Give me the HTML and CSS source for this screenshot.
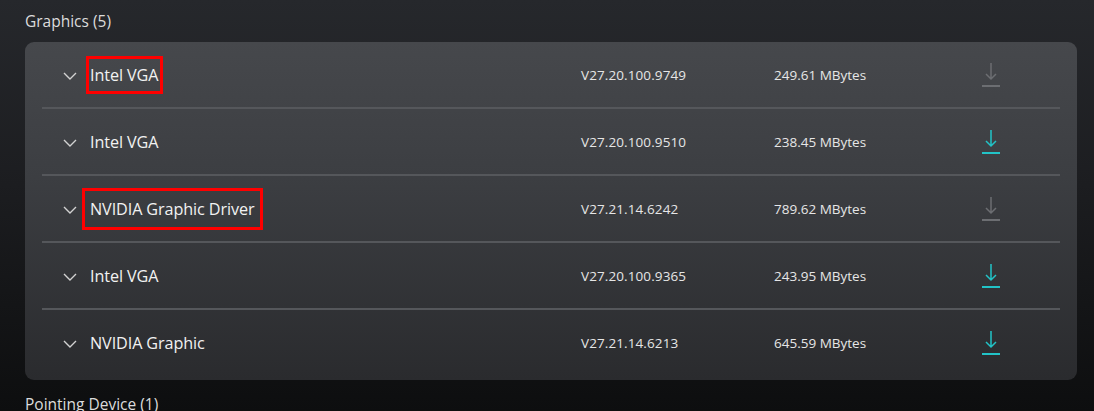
FILE: index.html
```html
<!DOCTYPE html>
<html>
<head>
<meta charset="utf-8">
<link rel="stylesheet" href="styles.css">
</head>
<body>
<div class="page">
  <div class="section-title">Graphics (5)</div>
  <div class="card">
    <div class="row">
      <svg class="chev" viewBox="0 0 14 8"><polyline points="1,1 7,7 13,1"/></svg>
      <div class="name"><span class="hl hl-a">Intel VGA</span></div>
      <div class="ver">V27.20.100.9749</div>
      <div class="size">249.61 MBytes</div>
      <svg class="dl off" viewBox="0 0 18 24"><path d="M9 0 V16 M4 11 L9 16 L14 11"/><path class="bar" d="M0 23 H18"/></svg>
    </div>
    <div class="row">
      <svg class="chev" viewBox="0 0 14 8"><polyline points="1,1 7,7 13,1"/></svg>
      <div class="name">Intel VGA</div>
      <div class="ver">V27.20.100.9510</div>
      <div class="size">238.45 MBytes</div>
      <svg class="dl on" viewBox="0 0 18 24"><path d="M9 0 V16 M4 11 L9 16 L14 11"/><path class="bar" d="M0 23 H18"/></svg>
    </div>
    <div class="row">
      <svg class="chev" viewBox="0 0 14 8"><polyline points="1,1 7,7 13,1"/></svg>
      <div class="name"><span class="hl hl-b">NVIDIA Graphic Driver</span></div>
      <div class="ver">V27.21.14.6242</div>
      <div class="size">789.62 MBytes</div>
      <svg class="dl off" viewBox="0 0 18 24"><path d="M9 0 V16 M4 11 L9 16 L14 11"/><path class="bar" d="M0 23 H18"/></svg>
    </div>
    <div class="row">
      <svg class="chev" viewBox="0 0 14 8"><polyline points="1,1 7,7 13,1"/></svg>
      <div class="name">Intel VGA</div>
      <div class="ver">V27.20.100.9365</div>
      <div class="size">243.95 MBytes</div>
      <svg class="dl on" viewBox="0 0 18 24"><path d="M9 0 V16 M4 11 L9 16 L14 11"/><path class="bar" d="M0 23 H18"/></svg>
    </div>
    <div class="row last">
      <svg class="chev" viewBox="0 0 14 8"><polyline points="1,1 7,7 13,1"/></svg>
      <div class="name">NVIDIA Graphic</div>
      <div class="ver">V27.21.14.6213</div>
      <div class="size">645.59 MBytes</div>
      <svg class="dl on" viewBox="0 0 18 24"><path d="M9 0 V16 M4 11 L9 16 L14 11"/><path class="bar" d="M0 23 H18"/></svg>
    </div>
  </div>
  <div class="section-title next">Pointing Device (1)</div>
</div>
</body>
</html>
```
FILE: styles.css
```css
html, body {
  margin: 0;
  padding: 0;
}
body {
  width: 1094px;
  height: 411px;
  overflow: hidden;
  background: linear-gradient(180deg, #26282c 0%, #1c1d20 45%, #0d0e0f 100%);
  font-family: "Open Sans", "Noto Sans", sans-serif;
  color: #eeeeee;
}
.page {
  padding: 0 17px 0 25px;
}
.section-title {
  height: 42px;
  line-height: 42px;
  font-size: 15.5px;
  color: #dcdcdc;
}
.section-title.next {
  margin-top: 10px;
  height: 28px;
  line-height: 28px;
}
.card {
  width: 1052px;
  box-sizing: border-box;
  padding: 0 17px 4px 17px;
  border-radius: 9px;
  background: linear-gradient(180deg, #46484c 0%, #3c3e42 40%, #2a2b2e 100%);
}
.row {
  display: grid;
  grid-template-columns: 48px 491px 193px 208px 18px;
  align-items: center;
  height: 65px;
  border-bottom: 2px solid #55575b;
}
.row.last {
  border-bottom: none;
  height: 66px;
}
.chev {
  width: 14px;
  height: 8px;
  margin-left: 21px;
  margin-top: 2px;
  fill: none;
  stroke: #d2d2d2;
  stroke-width: 1.4;
}
.name {
  font-size: 16.2px;
  color: #f2f2f2;
  letter-spacing: -0.1px;
  white-space: nowrap;
}
.ver {
  font-size: 13.5px;
  letter-spacing: 0.1px;
  color: #e6e6e6;
  white-space: nowrap;
}
.size {
  font-size: 13.5px;
  color: #e6e6e6;
  white-space: nowrap;
}
.dl {
  width: 18px;
  height: 24px;
  fill: none;
  stroke-width: 1.5;
}
.dl .bar {
  stroke-width: 2;
}
.dl.off {
  stroke: #6c6e72;
}
.dl.on {
  stroke: #22c3c7;
}
.hl {
  display: inline-block;
  border: 3px solid #ff0000;
}
.hl-a {
  padding: 5px 2px 5px 1px;
  margin: -8px -5px -8px -4px;
}
.hl-b {
  padding: 7px 6px 7px 5px;
  margin: -10px -9px -10px -8px;
}
```
